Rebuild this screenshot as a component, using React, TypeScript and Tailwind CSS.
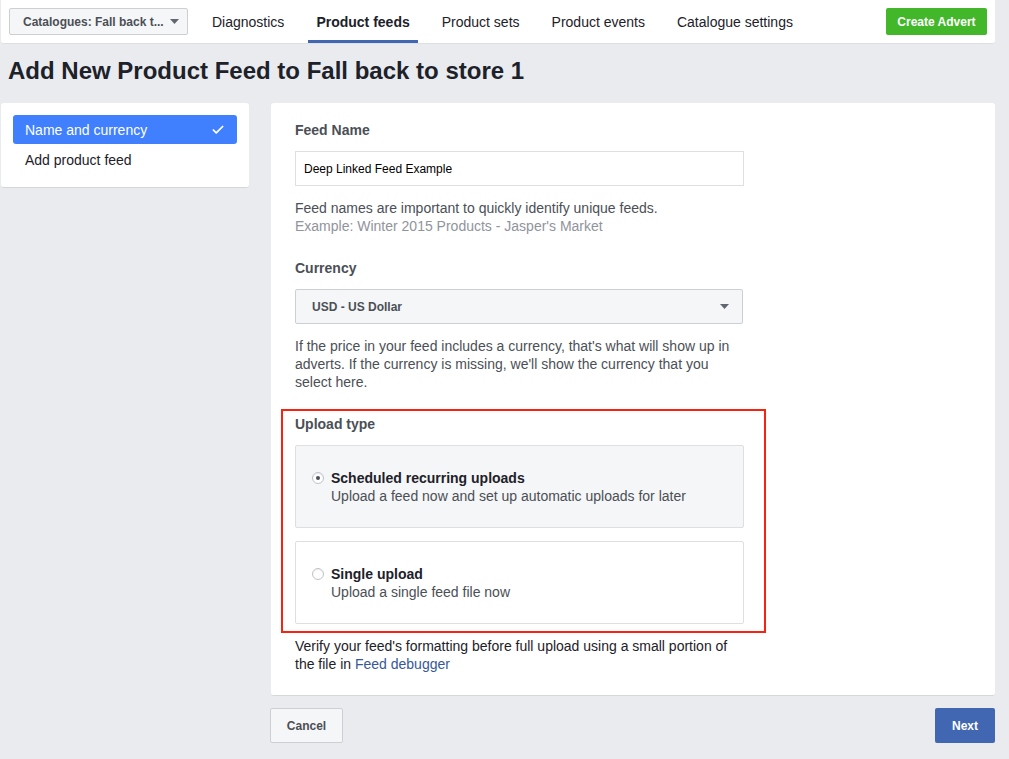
import { Check } from "lucide-react";

const TABS = [
  { label: "Diagnostics", active: false },
  { label: "Product feeds", active: true },
  { label: "Product sets", active: false },
  { label: "Product events", active: false },
  { label: "Catalogue settings", active: false },
];

function Caret({ className }: { className?: string }) {
  return (
    <svg width="9" height="5" viewBox="0 0 9 5" className={className}>
      <path d="M0 0h9L4.5 5z" fill="#606770" />
    </svg>
  );
}

function UploadOption({
  title,
  desc,
  selected,
}: {
  title: string;
  desc: string;
  selected?: boolean;
}) {
  return (
    <div
      className={
        "flex items-center h-[83px] pl-4 border rounded-[2px] " +
        (selected ? "bg-[#f5f6f7] border-[#dddfe2]" : "bg-white border-[#dddfe2]")
      }
    >
      <div className="flex gap-[7px]">
        <div className="mt-[3px] w-3 h-3 rounded-full border border-[#bec3c9] bg-white flex items-center justify-center shrink-0 shadow-[inset_0_1px_1px_rgba(0,0,0,0.08)]">
          {selected && <div className="w-1 h-1 rounded-full bg-[#4b4f56]" />}
        </div>
        <div>
          <div className="text-[14px] leading-[18px] font-bold text-[#1d2129]">{title}</div>
          <div className="text-[14px] leading-[18px] text-[#4b4f56]">{desc}</div>
        </div>
      </div>
    </div>
  );
}

export default function App() {
  return (
    <div className="min-h-[759px] bg-[#e9ebee] font-['Liberation_Sans',Arial,sans-serif] text-[#1d2129]">
      <div className="w-[995px] pl-px">
        {/* Top bar */}
        <div className="h-[44px] bg-white border-b border-[#dddfe2] flex items-stretch pl-2 pr-2 rounded-b-[3px]">
          <div className="flex items-center">
            <button className="h-[27px] w-[179px] flex items-center gap-[6px] pl-[13px] bg-[#f5f6f7] border border-[#ccd0d5] rounded-[2px] text-[12px] font-bold text-[#4b4f56]">
              Catalogues: Fall back t...
              <Caret />
            </button>
          </div>
          <div className="flex items-stretch gap-4 ml-4">
            {TABS.map((t) => (
              <div
                key={t.label}
                className={
                  "px-2 flex items-center text-[14px] border-b-[3px] pt-[5px] " +
                  (t.active ? "font-bold text-[#1d2129] border-[#4267b2]" : "text-[#1d2129] border-transparent")
                }
              >
                {t.label}
              </div>
            ))}
          </div>
          <div className="ml-auto flex items-center">
            <button className="h-[27px] w-[101px] bg-[#42b72a] rounded-[2px] text-white text-[12px] font-bold">
              Create Advert
            </button>
          </div>
        </div>

        {/* Title */}
        <h1 className="pl-[7px] pt-[13px] pb-[19px] text-[24px] leading-[27px] font-bold text-[#1d2129]">
          Add New Product Feed to Fall back to store 1
        </h1>

        <div className="flex gap-[22px] items-start">
          {/* Steps */}
          <div className="w-[248px] bg-white rounded-[3px] border-b border-[#d3d6db] p-3 pb-[18px]">
            <div className="h-[29px] bg-[#4080ff] rounded-[3px] flex items-center justify-between pl-3 pr-3 pt-[2px] text-white text-[14px]">
              Name and currency
              <Check size={14} strokeWidth={3} className="-mt-[2px]" />
            </div>
            <div className="pl-3 pt-[7px] text-[14px] leading-[18px] text-[#1d2129]">Add product feed</div>
          </div>

          {/* Main */}
          <div className="flex-1">
            <div className="bg-white rounded-[3px] border-b border-[#d3d6db] pl-6 pt-[18px] pb-[22px]">
              <div className="w-[449px]">
                <div className="text-[14px] leading-[18px] font-bold text-[#4b4f56]">Feed Name</div>
                <div className="mt-3 h-[35px] border border-[#dddfe2] flex items-center pl-2 text-[12px] text-black">
                  Deep Linked Feed Example
                </div>
                <div className="mt-[13px] text-[14px] leading-[18px] text-[#4b4f56]">
                  Feed names are important to quickly identify unique feeds.
                  <div className="text-[#90949c]">Example: Winter 2015 Products - Jasper's Market</div>
                </div>

                <div className="mt-6 text-[14px] leading-[18px] font-bold text-[#4b4f56]">Currency</div>
                <div className="mt-3 h-[35px] w-[448px] bg-[#f5f6f7] border border-[#ccd0d5] rounded-[2px] flex items-center justify-between pl-4 pr-[13px] text-[12px] font-bold text-[#4b4f56]">
                  USD - US Dollar
                  <Caret />
                </div>
                <p className="mt-[13px] text-[14px] leading-[18px] text-[#4b4f56]">
                  If the price in your feed includes a currency, that's what will show up in adverts. If the currency
                  is missing, we'll show the currency that you select here.
                </p>

                <div className="mt-[18px] -ml-[14px] w-[485px] border-2 border-[#f5230f] pl-3 pr-5 pt-1 pb-[7px]">
                  <div className="text-[14px] leading-[18px] font-bold text-[#4b4f56]">Upload type</div>
                  <div className="mt-3 flex flex-col gap-[13px]">
                    <UploadOption
                      selected
                      title="Scheduled recurring uploads"
                      desc="Upload a feed now and set up automatic uploads for later"
                    />
                    <UploadOption title="Single upload" desc="Upload a single feed file now" />
                  </div>
                </div>

                <p className="mt-[4px] text-[14px] leading-[18px] text-[#1d2129]">
                  Verify your feed's formatting before full upload using a small portion of the file in{" "}
                  <a className="text-[#365899]">Feed debugger</a>
                </p>
              </div>
            </div>

            <div className="mt-[12px] flex justify-between -ml-px">
              <button className="h-[35px] w-[73px] bg-[#f5f6f7] border border-[#ccd0d5] rounded-[2px] text-[12px] font-bold text-[#4b4f56]">
                Cancel
              </button>
              <button className="h-[35px] w-[60px] bg-[#4267b2] rounded-[2px] text-[12px] font-bold text-white">
                Next
              </button>
            </div>
          </div>
        </div>
      </div>
    </div>
  );
}
